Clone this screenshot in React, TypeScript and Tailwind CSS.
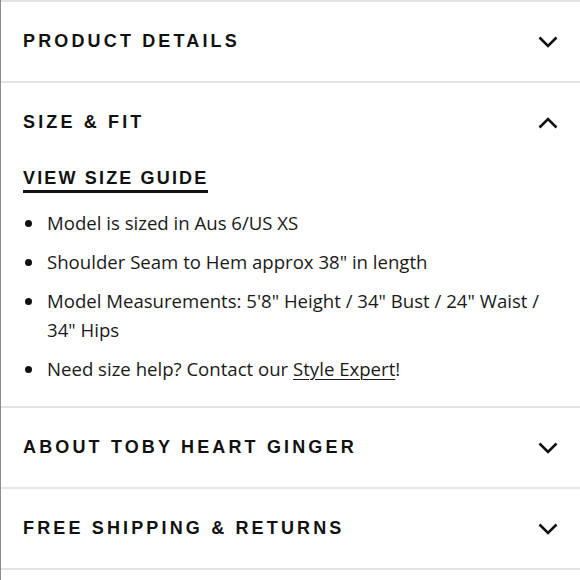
import React, { useState } from 'react';

const Chevron = ({ up }: { up?: boolean }) => (
  <svg width="20" height="12" viewBox="0 0 20 12" className="shrink-0" aria-hidden>
    <polyline
      points={up ? '1.5,10.5 10,2 18.5,10.5' : '1.5,1.5 10,10 18.5,1.5'}
      fill="none"
      stroke="#111"
      strokeWidth="2.6"
    />
  </svg>
);

const sections = ['PRODUCT DETAILS', 'SIZE & FIT', 'ABOUT TOBY HEART GINGER', 'FREE SHIPPING & RETURNS'];

const bullets: React.ReactNode[] = [
  'Model is sized in Aus 6/US XS',
  'Shoulder Seam to Hem approx 38" in length',
  'Model Measurements: 5\'8" Height / 34" Bust / 24" Waist / 34" Hips',
  <>
    Need size help? Contact our <a className="underline underline-offset-[3px] decoration-1">Style Expert</a>!
  </>,
];

const App: React.FC = () => {
  const [open, setOpen] = useState('SIZE & FIT');

  return (
    <div className="w-[580px] h-[580px] overflow-hidden bg-white border-l border-[#8c8c8c]">
      <div className="border-t-2 border-[#e4e4e4]">
        {sections.map((title) => (
          <div key={title} className="border-b-2 border-[#e4e4e4]">
            <button
              onClick={() => setOpen(open === title ? '' : title)}
              className="w-full h-[79px] flex items-center justify-between pl-[22px] pr-[22px] text-left"
            >
              <span className="text-[18px] font-bold tracking-[0.175em] text-[#111] font-['Liberation_Sans',sans-serif]">
                {title}
              </span>
              <Chevron up={open === title} />
            </button>

            {open === title && title === 'SIZE & FIT' && (
              <div className="px-[22px] pt-[4px] pb-[23px]">
                <a className="inline-block text-[18px] leading-[22px] font-bold tracking-[0.12em] text-[#111] border-b-[3px] border-[#111] pb-[1px] font-['Liberation_Sans',sans-serif]">
                  VIEW SIZE GUIDE
                </a>
                <ul className="mt-[15px] flex flex-col gap-[10px] text-[18.6px] leading-[29px] text-[#1a1a1a] font-['Open_Sans',sans-serif]">
                  {bullets.map((b, i) => (
                    <li key={i} className="flex">
                      <span className="shrink-0 w-[7px] h-[7px] rounded-full bg-[#111] mt-[12px] ml-[2px] mr-[15px]" />
                      <span>{b}</span>
                    </li>
                  ))}
                </ul>
              </div>
            )}
          </div>
        ))}
      </div>
    </div>
  );
};

export default App;
